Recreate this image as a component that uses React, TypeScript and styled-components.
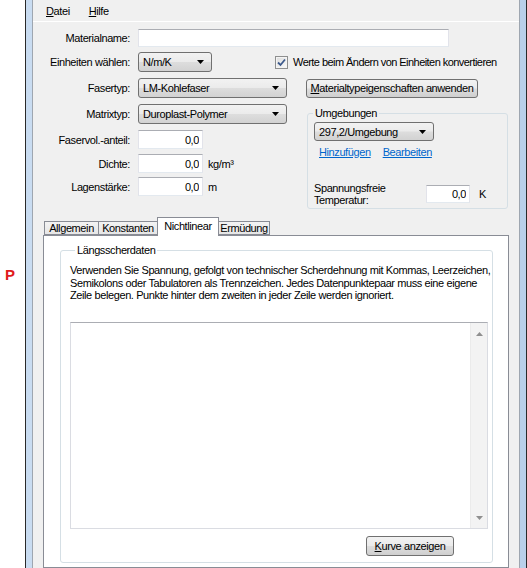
import styled, { createGlobalStyle } from "styled-components";

const GlobalStyle = createGlobalStyle`
  html, body { margin: 0; padding: 0; background: #fff; }
  body {
    font-family: "Liberation Sans", Arial, sans-serif;
    font-size: 11px;
    letter-spacing: -0.4px;
    color: #000;
  }
  * { box-sizing: border-box; }
`;

const tabs = [
  { key: "allgemein", label: "Allgemein", w: 55 },
  { key: "konstanten", label: "Konstanten", w: 60 },
  { key: "nichtlinear", label: "Nichtlinear", w: 62, active: true },
  { key: "ermuedung", label: "Ermüdung", w: 52 },
];

function Arrow() {
  return (
    <svg width="7" height="4" viewBox="0 0 7 4">
      <polygon points="0,0 7,0 3.5,4" fill="#000" />
    </svg>
  );
}

function Combo({ w, h = 20, value }: { w: number; h?: number; value: string }) {
  return (
    <ComboBox $w={w} $h={h}>
      <span>{value}</span>
      <Arrow />
    </ComboBox>
  );
}

export default function App() {
  return (
    <>
      <GlobalStyle />
      <Page>
        <Gutter>
          <Marker>P</Marker>
        </Gutter>
        <Frame>
          <Window>
            <MenuBar>
              <MenuItem>
                <u>D</u>atei
              </MenuItem>
              <MenuItem>
                <u>H</u>ilfe
              </MenuItem>
            </MenuBar>

            <Form>
              <Row $h={18} $mt={7}>
                <Label>Materialname:</Label>
                <Field $w={311} $h={18} readOnly value="" />
              </Row>

              <Row $h={20} $mt={5}>
                <Label>Einheiten wählen:</Label>
                <Combo w={74} value="N/m/K" />
                <CheckLine>
                  <CheckBox>
                    <svg width="9" height="9" viewBox="0 0 9 9">
                      <path d="M1 4.5 L3.5 7 L8 1.5" stroke="#3d5a8c" strokeWidth="1.8" fill="none" />
                    </svg>
                  </CheckBox>
                  <CheckText>Werte beim Ändern von Einheiten konvertieren</CheckText>
                </CheckLine>
              </Row>

              <Row $h={20} $mt={6}>
                <Label>Fasertyp:</Label>
                <Combo w={149} value="LM-Kohlefaser" />
                <Button $w={172} $ml={19}>
                  <u>M</u>aterialtypeigenschaften anwenden
                </Button>
              </Row>

              <Lower>
                <LeftCol>
                  <Row $h={20} $mt={0}>
                    <Label>Matrixtyp:</Label>
                    <Combo w={149} value="Duroplast-Polymer" />
                  </Row>
                  <Row $h={19} $mt={6}>
                    <Label>Faservol.-anteil:</Label>
                    <Field $w={65} $h={19} $right readOnly value="0,0" />
                  </Row>
                  <Row $h={19} $mt={5}>
                    <Label>Dichte:</Label>
                    <Field $w={65} $h={19} $right readOnly value="0,0" />
                    <Unit>kg/m³</Unit>
                  </Row>
                  <Row $h={19} $mt={4}>
                    <Label>Lagenstärke:</Label>
                    <Field $w={65} $h={19} $right readOnly value="0,0" />
                    <Unit>m</Unit>
                  </Row>
                </LeftCol>

                <EnvGroup>
                  <Legend>Umgebungen</Legend>
                  <EnvBody>
                    <Combo w={120} h={19} value="297,2/Umgebung" />
                    <Links>
                      <Link>Hinzufügen</Link>
                      <Link>Bearbeiten</Link>
                    </Links>
                    <TempRow>
                      <TempLabel>
                        Spannungsfreie
                        <br />
                        Temperatur:
                      </TempLabel>
                      <Field $w={44} $h={18} $right readOnly value="0,0" />
                      <Unit $ml={9}>K</Unit>
                    </TempRow>
                  </EnvBody>
                </EnvGroup>
              </Lower>
            </Form>

            <TabArea>
              <TabStrip>
                {tabs.map((t) => (
                  <Tab key={t.key} $active={!!t.active} style={{ width: t.w }}>
                    {t.label}
                  </Tab>
                ))}
              </TabStrip>
              <Panel>
                <DataGroup>
                  <Legend>Längsscherdaten</Legend>
                  <Hint>
                    Verwenden Sie Spannung, gefolgt von technischer Scherdehnung mit Kommas, Leerzeichen,
                    <br />
                    Semikolons oder Tabulatoren als Trennzeichen. Jedes Datenpunktepaar muss eine eigene
                    <br />
                    Zeile belegen. Punkte hinter dem zweiten in jeder Zeile werden ignoriert.
                  </Hint>
                  <DataBox>
                    <DataText />
                    <ScrollBar>
                      <svg width="7" height="4" viewBox="0 0 7 4">
                        <polygon points="0,4 7,4 3.5,0" fill="#8f8f8f" />
                      </svg>
                      <svg width="7" height="4" viewBox="0 0 7 4">
                        <polygon points="0,0 7,0 3.5,4" fill="#8f8f8f" />
                      </svg>
                    </ScrollBar>
                  </DataBox>
                  <ButtonRow>
                    <Button $w={88} $h={20}>
                      <u>K</u>urve anzeigen
                    </Button>
                  </ButtonRow>
                </DataGroup>
              </Panel>
            </TabArea>
          </Window>
        </Frame>
      </Page>
    </>
  );
}

const Page = styled.div`
  display: flex;
  width: 527px;
  height: 568px;
  overflow: hidden;
`;

const Gutter = styled.div`
  width: 25px;
  flex-shrink: 0;
  padding: 266px 0 0 5px;
`;

const Marker = styled.div`
  color: #e01b1b;
  font-weight: bold;
  font-size: 15px;
  letter-spacing: 0;
`;

const Frame = styled.div`
  width: 502px;
  height: 568px;
  display: flex;
  padding: 0 6px;
  border-left: 1px solid #2a2a2a;
  border-right: 1px solid #2a2a2a;
  background: linear-gradient(90deg, #c9dcf1, #b9d0ea);
`;

const Window = styled.div`
  flex: 1;
  display: flex;
  flex-direction: column;
  background: #f0f0f0;
  border-left: 1px solid #9ea6b0;
  border-right: 1px solid #9ea6b0;
  overflow: hidden;
`;

const MenuBar = styled.div`
  height: 22px;
  flex-shrink: 0;
  display: flex;
  align-items: center;
  gap: 19px;
  padding-left: 13px;
  border-bottom: 1px solid #fff;
`;

const MenuItem = styled.span`
  u { text-decoration-thickness: 1px; }
`;

const Form = styled.div`
  display: flex;
  flex-direction: column;
`;

const Row = styled.div<{ $h: number; $mt: number }>`
  display: flex;
  align-items: center;
  height: ${(p) => p.$h}px;
  margin-top: ${(p) => p.$mt}px;
`;

const Label = styled.span`
  width: 97px;
  margin-right: 8px;
  flex-shrink: 0;
  text-align: right;
  white-space: nowrap;
`;

const Field = styled.input<{ $w: number; $h: number; $right?: boolean }>`
  width: ${(p) => p.$w}px;
  height: ${(p) => p.$h}px;
  margin: 0;
  padding: 0 3px;
  font: inherit;
  letter-spacing: inherit;
  text-align: ${(p) => (p.$right ? "right" : "left")};
  background: #fff;
  border: 1px solid #e2e3ea;
  border-top-color: #abadb3;
  border-bottom-color: #e3e9ef;
  outline: none;
  flex-shrink: 0;
`;

const ComboBox = styled.div<{ $w: number; $h: number }>`
  width: ${(p) => p.$w}px;
  height: ${(p) => p.$h}px;
  flex-shrink: 0;
  display: flex;
  align-items: center;
  justify-content: space-between;
  padding: 0 7px 0 4px;
  border: 1px solid #707070;
  border-radius: 3px;
  background: linear-gradient(#f2f2f2 0%, #ebebeb 48%, #dddddd 52%, #d2d2d2 100%);
  white-space: nowrap;
`;

const Button = styled.div<{ $w: number; $h?: number; $ml?: number }>`
  width: ${(p) => p.$w}px;
  height: ${(p) => p.$h ?? 19}px;
  margin-left: ${(p) => p.$ml ?? 0}px;
  flex-shrink: 0;
  display: flex;
  align-items: center;
  justify-content: center;
  border: 1px solid #707070;
  border-radius: 3px;
  background: linear-gradient(#f2f2f2 0%, #ebebeb 48%, #dddddd 52%, #cfcfcf 100%);
  white-space: nowrap;
`;

const CheckLine = styled.label`
  display: flex;
  align-items: center;
  gap: 5px;
  margin-left: 63px;
  white-space: nowrap;
`;

const CheckText = styled.span`
  letter-spacing: -0.55px;
`;

const CheckBox = styled.span`
  width: 13px;
  height: 13px;
  display: flex;
  align-items: center;
  justify-content: center;
  border: 1px solid #8e8f8f;
  background: linear-gradient(135deg, #dcdcdc, #fbfbfb);
  box-shadow: inset 0 0 0 1px #f4f4f4;
`;

const Lower = styled.div`
  display: flex;
  margin-top: 6px;
`;

const LeftCol = styled.div`
  width: 254px;
  display: flex;
  flex-direction: column;
`;

const Unit = styled.span<{ $ml?: number }>`
  margin-left: ${(p) => p.$ml ?? 5}px;
  white-space: nowrap;
`;

const EnvGroup = styled.fieldset`
  width: 201px;
  height: 102px;
  margin: 3px 0 0 20px;
  padding: 0 6px 1px 6px;
  min-width: 0;
  border: 1px solid #d5dfe5;
  border-radius: 3px;
`;

const Legend = styled.legend`
  margin-left: -1px;
  padding: 0 2px;
  line-height: 12px;
`;

const EnvBody = styled.div`
  display: flex;
  flex-direction: column;
  padding-top: 3px;
`;

const Links = styled.div`
  display: flex;
  gap: 12px;
  height: 12px;
  line-height: 12px;
  margin: 5px 0 0 5px;
`;

const Link = styled.a`
  color: #0066cc;
  text-decoration: underline;
  cursor: pointer;
`;

const TempRow = styled.div`
  display: flex;
  align-items: center;
  height: 24px;
  margin-top: 24px;
`;

const TempLabel = styled.span`
  width: 112px;
  line-height: 12px;
  flex-shrink: 0;
`;

const TabArea = styled.div`
  flex: 1;
  display: flex;
  flex-direction: column;
  margin: 8px 10px 0;
`;

const TabStrip = styled.div`
  display: flex;
  align-items: flex-end;
  height: 18px;
  position: relative;
  z-index: 1;
`;

const Tab = styled.div<{ $active: boolean }>`
  height: ${(p) => (p.$active ? 19 : 14)}px;
  margin-bottom: ${(p) => (p.$active ? -1 : 0)}px;
  margin-left: -1px;
  padding-top: ${(p) => (p.$active ? 2 : 0)}px;
  display: flex;
  justify-content: center;
  align-items: ${(p) => (p.$active ? "flex-start" : "center")};
  border: 1px solid #898c95;
  border-bottom: ${(p) => (p.$active ? "none" : "1px solid #898c95")};
  background: ${(p) => (p.$active ? "#fff" : "linear-gradient(#f3f3f3, #e6e6e6)")};
  white-space: nowrap;
  &:first-child { margin-left: 1px; }
`;

const Panel = styled.div`
  flex: 1;
  display: flex;
  flex-direction: column;
  background: #fff;
  border: 1px solid #898c95;
  padding: 8px 15px 0 16px;
`;

const DataGroup = styled.fieldset`
  margin: 0;
  padding: 0 4px 6px 9px;
  min-width: 0;
  border: 1px solid #d5dfe5;
  border-radius: 3px;
  legend { margin-left: 5px; }
`;

const Hint = styled.p`
  margin: 8px 0 0;
  line-height: 12.5px;
  white-space: nowrap;
`;

const DataBox = styled.div`
  display: flex;
  width: 418px;
  height: 207px;
  margin-top: 20px;
  border: 1px solid #dadce2;
  border-top-color: #abadb3;
  background: #fff;
`;

const DataText = styled.div`
  flex: 1;
`;

const ScrollBar = styled.div`
  width: 17px;
  display: flex;
  flex-direction: column;
  align-items: center;
  justify-content: space-between;
  padding: 9px 0 8px;
  background: #f3f3f3;
  border-left: 1px solid #ebebeb;
`;

const ButtonRow = styled.div`
  display: flex;
  justify-content: flex-end;
  padding-right: 34px;
  margin-top: 7px;
`;
